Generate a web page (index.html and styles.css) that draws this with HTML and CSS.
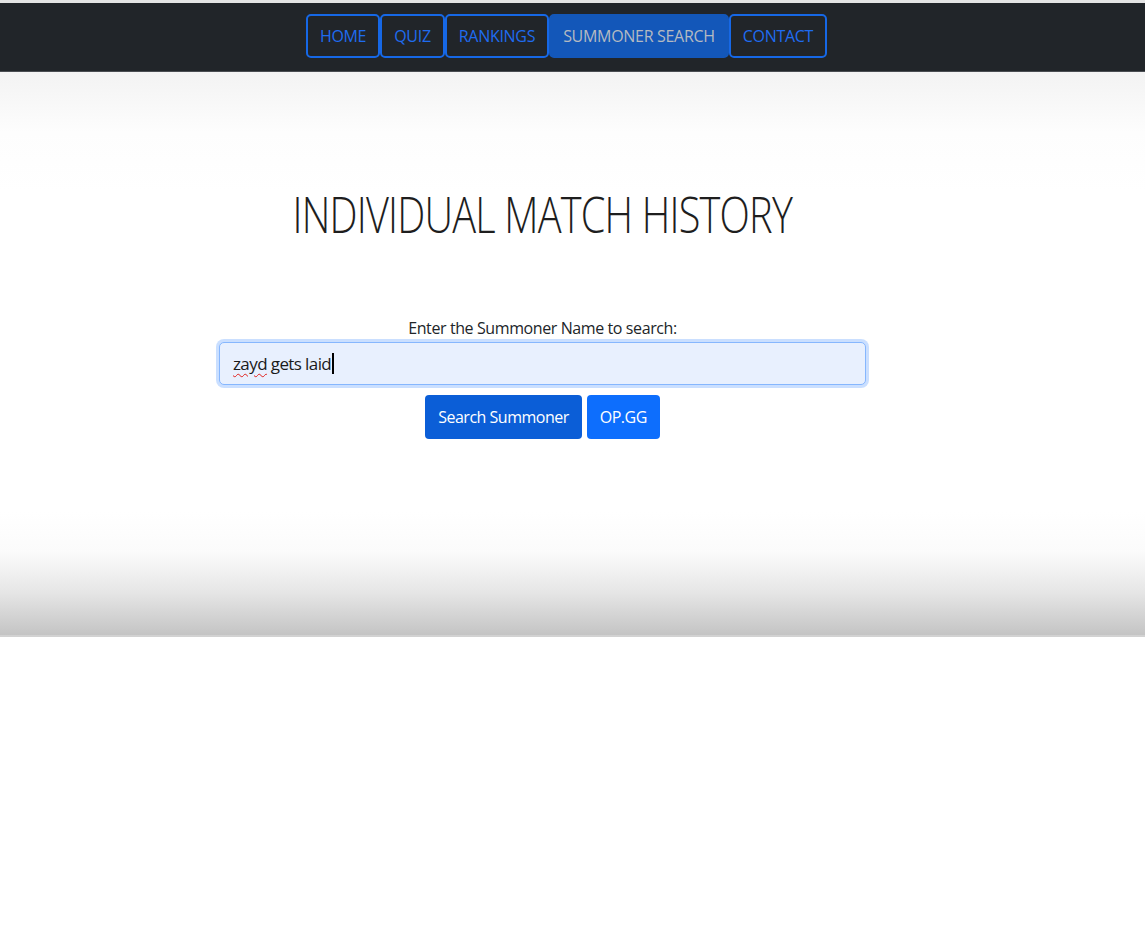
FILE: index.html
```html
<!DOCTYPE html>
<html lang="en">
<head>
<meta charset="utf-8">
<title>Individual Match History</title>
<link rel="stylesheet" href="styles.css">
</head>
<body>
<div class="topline"></div>
<header class="navbar">
  <nav class="nav">
    <a class="nav-btn" href="#">HOME</a>
    <a class="nav-btn" href="#">QUIZ</a>
    <a class="nav-btn" href="#">RANKINGS</a>
    <a class="nav-btn active" href="#">SUMMONER SEARCH</a>
    <a class="nav-btn" href="#">CONTACT</a>
  </nav>
</header>
<main class="hero">
  <div class="container">
    <h1 class="title">INDIVIDUAL MATCH HISTORY</h1>
    <form class="search">
      <label class="label" for="name">Enter the Summoner Name to search:</label>
      <div class="input"><span class="typo">zayd</span> gets laid<span class="caret"></span></div>
      <div class="actions">
        <button type="button" class="btn btn-dark">Search Summoner</button>
        <button type="button" class="btn btn-primary">OP.GG</button>
      </div>
    </form>
  </div>
</main>
</body>
</html>
```
FILE: styles.css
```css
html, body {
  margin: 0;
  padding: 0;
  background: #ffffff;
  font-family: "Open Sans", "Noto Sans", sans-serif;
}

.topline {
  height: 3px;
  background: #e4e4e4;
}

.navbar {
  height: 69px;
  box-sizing: border-box;
  background: #212529;
  border-bottom: 1px solid #4a4d52;
  display: flex;
  justify-content: center;
  align-items: flex-start;
  padding-top: 11px;
  padding-right: 12px;
}

.nav {
  display: flex;
  gap: 0;
}

.nav-btn {
  display: flex;
  align-items: center;
  justify-content: center;
  height: 44px;
  box-sizing: border-box;
  padding: 0 12px;
  border: 2px solid #1668e6;
  border-radius: 5px;
  color: #1f6cf0;
  text-decoration: none;
  font-size: 16px;
  letter-spacing: -0.3px;
}

.nav-btn.active {
  background: #1357b9;
  border-color: #1357b9;
  color: #b4bac2;
}

.hero {
  height: 565px;
  background: linear-gradient(to bottom, #f3f3f3 0px, #fdfdfd 60px, #ffffff 120px, #ffffff 440px, #fbfbfb 480px, #e6e6e6 520px, #c4c4c4 563px);
  border-bottom: 2px solid #d2d2d2;
  box-sizing: border-box;
  display: flex;
  justify-content: flex-start;
}

.container {
  width: 647px;
  margin-left: 219px;
  display: flex;
  flex-direction: column;
  align-items: center;
  padding-top: 113px;
}

.title {
  margin: 0;
  font-weight: 300;
  font-size: 49px;
  line-height: 1.2;
  color: #1e1e1e;
  letter-spacing: -1px;
  white-space: nowrap;
  transform: scaleX(0.81);
}

.search {
  width: 100%;
  display: flex;
  flex-direction: column;
  align-items: center;
  margin-top: 73px;
}

.label {
  font-size: 16px;
  color: #212529;
  letter-spacing: -0.4px;
  line-height: 22px;
}

.input {
  width: 100%;
  box-sizing: border-box;
  height: 43px;
  margin-top: 3px;
  background: #e8f0fe;
  border: 1px solid #86b7fe;
  border-radius: 5px;
  box-shadow: 0 0 0 3px rgba(13, 110, 253, 0.22);
  display: flex;
  align-items: center;
  padding-left: 13px;
  font-size: 17px;
  color: #1a1a1a;
  letter-spacing: -0.6px;
  white-space: pre;
}

.typo {
  text-decoration: underline wavy #e0201c;
  text-decoration-thickness: 1px;
  text-underline-offset: 3px;
}

.caret {
  display: inline-block;
  width: 2px;
  height: 21px;
  background: #000;
  margin-left: 1px;
}

.actions {
  display: flex;
  gap: 5px;
  margin-top: 10px;
}

.btn {
  height: 44px;
  border: none;
  border-radius: 4px;
  color: #ffffff;
  font-family: "Open Sans", "Noto Sans", sans-serif;
  font-size: 16px;
  letter-spacing: -0.5px;
  padding: 0 13px;
}

.btn-dark {
  background: #0b5ed7;
}

.btn-primary {
  background: #0d6efd;
}
```
